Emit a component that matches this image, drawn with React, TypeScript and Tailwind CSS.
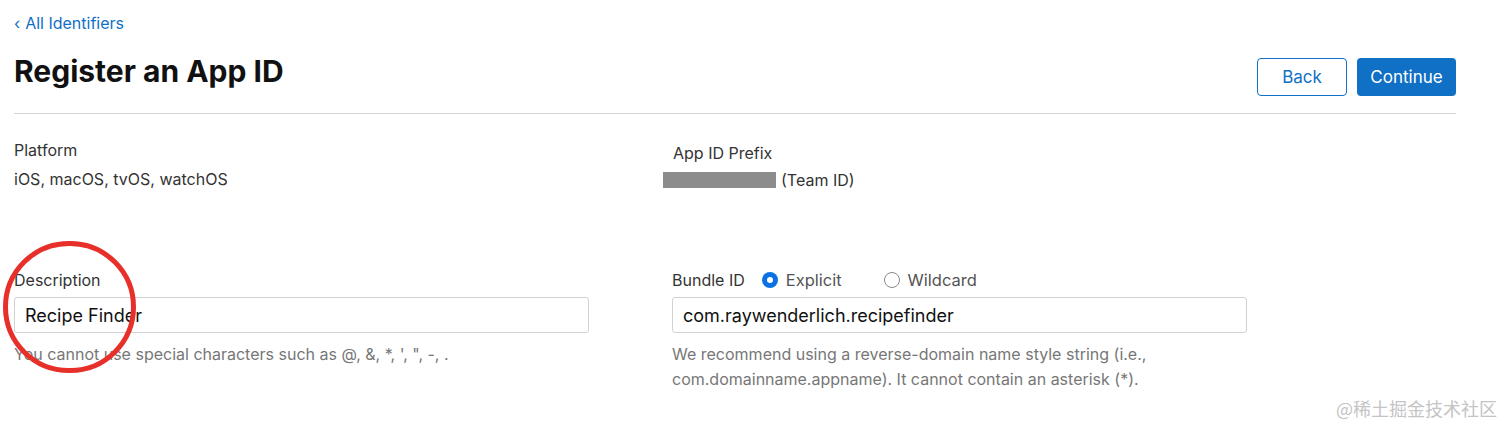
import React from "react";

const font = { fontFamily: "Inter, 'Noto Sans', 'Liberation Sans', sans-serif" };

function Radio({ checked, label }: { checked: boolean; label: string }) {
  return (
    <label className="flex items-center gap-[8px] text-[16.5px] text-[#555]">
      {checked ? (
        <span className="flex h-[16px] w-[16px] items-center justify-center rounded-full bg-[#0a72e5]">
          <span className="h-[6px] w-[6px] rounded-full bg-white" />
        </span>
      ) : (
        <span className="h-[16px] w-[16px] rounded-full border border-[#8a8a8a] bg-white" />
      )}
      {label}
    </label>
  );
}

export default function App() {
  return (
    <div className="relative h-[431px] w-[1512px] overflow-hidden bg-white text-[#333]" style={font}>
      <div className="w-[1456px] pl-[14px]">
        <a className="mt-[13px] flex items-center gap-[5px] text-[16px] leading-[20px] text-[#0f70c5]">
          <span>‹</span>All Identifiers
        </a>

        <div className="mt-[20px] flex items-start justify-between">
          <h1 className="text-[30px] font-bold leading-[36px] text-[#111]">Register an App ID</h1>
          <div className="mt-[5px] flex gap-[10px]">
            <button className="h-[38px] w-[90px] rounded-[4px] border border-[#0f70c5] bg-white pt-[1px] text-[17px] text-[#0f70c5]">
              Back
            </button>
            <button className="h-[38px] w-[99px] rounded-[4px] bg-[#0f70c5] pt-[1px] text-[17px] text-white">
              Continue
            </button>
          </div>
        </div>

        <div className="mt-[17px] h-px bg-[#d6d6d6]" />

        <div className="mt-[26px] grid grid-cols-[659px_1fr]">
          <div>
            <div className="text-[16px] leading-[20px] text-[#333]">Platform</div>
            <div className="mt-[9px] text-[16px] leading-[20px] text-[#333]">iOS, macOS, tvOS, watchOS</div>
          </div>
          <div className="pt-[3px]">
            <div className="text-[16px] leading-[20px] text-[#333]">App ID Prefix</div>
            <div className="mt-[7px] flex items-center gap-[5px] text-[16px] leading-[20px] text-[#333]">
              <span className="-ml-[10px] h-[16px] w-[113px] bg-[#8c8c8c]" />
              (Team ID)
            </div>
          </div>
        </div>

        <div className="mt-[80px] grid grid-cols-[658px_1fr]">
          <div>
            <div className="text-[16px] leading-[20px] text-[#333]">Description</div>
            <div className="mt-[7px] flex h-[36px] w-[575px] items-center rounded-[3px] border border-[#d2d2d2] px-[10px] text-[18px] text-[#111]">
              Recipe Finder
            </div>
            <div className="mt-[9px] text-[16px] leading-[24px] text-[#777]">
              You cannot use special characters such as @, &amp;, *, ', ", -, .
            </div>
          </div>
          <div>
            <div className="flex h-[20px] items-center text-[16px] text-[#333]">
              <span className="mr-[17px]">Bundle ID</span>
              <Radio checked label="Explicit" />
              <span className="w-[42px]" />
              <Radio checked={false} label="Wildcard" />
            </div>
            <div className="mt-[7px] flex h-[36px] w-[575px] items-center rounded-[3px] border border-[#d2d2d2] px-[10px] text-[18px] text-[#111]">
              com.raywenderlich.recipefinder
            </div>
            <div className="mt-[9px] text-[16px] leading-[25px] text-[#777]">
              We recommend using a reverse-domain name style string (i.e.,
              <br />
              com.domainname.appname). It cannot contain an asterisk (*).
            </div>
          </div>
        </div>
      </div>

      {/* red annotation circle */}
      <div className="pointer-events-none absolute left-[3px] top-[241px] h-[132px] w-[133px] rounded-full border-[5px] border-[#e8302a]" />

      <div
        className="absolute right-[15px] top-[395px] text-[18px] text-[#c4c4c4]"
        style={{ fontFamily: "'Noto Sans CJK SC', sans-serif" }}
      >
        @稀土掘金技术社区
      </div>
    </div>
  );
}
